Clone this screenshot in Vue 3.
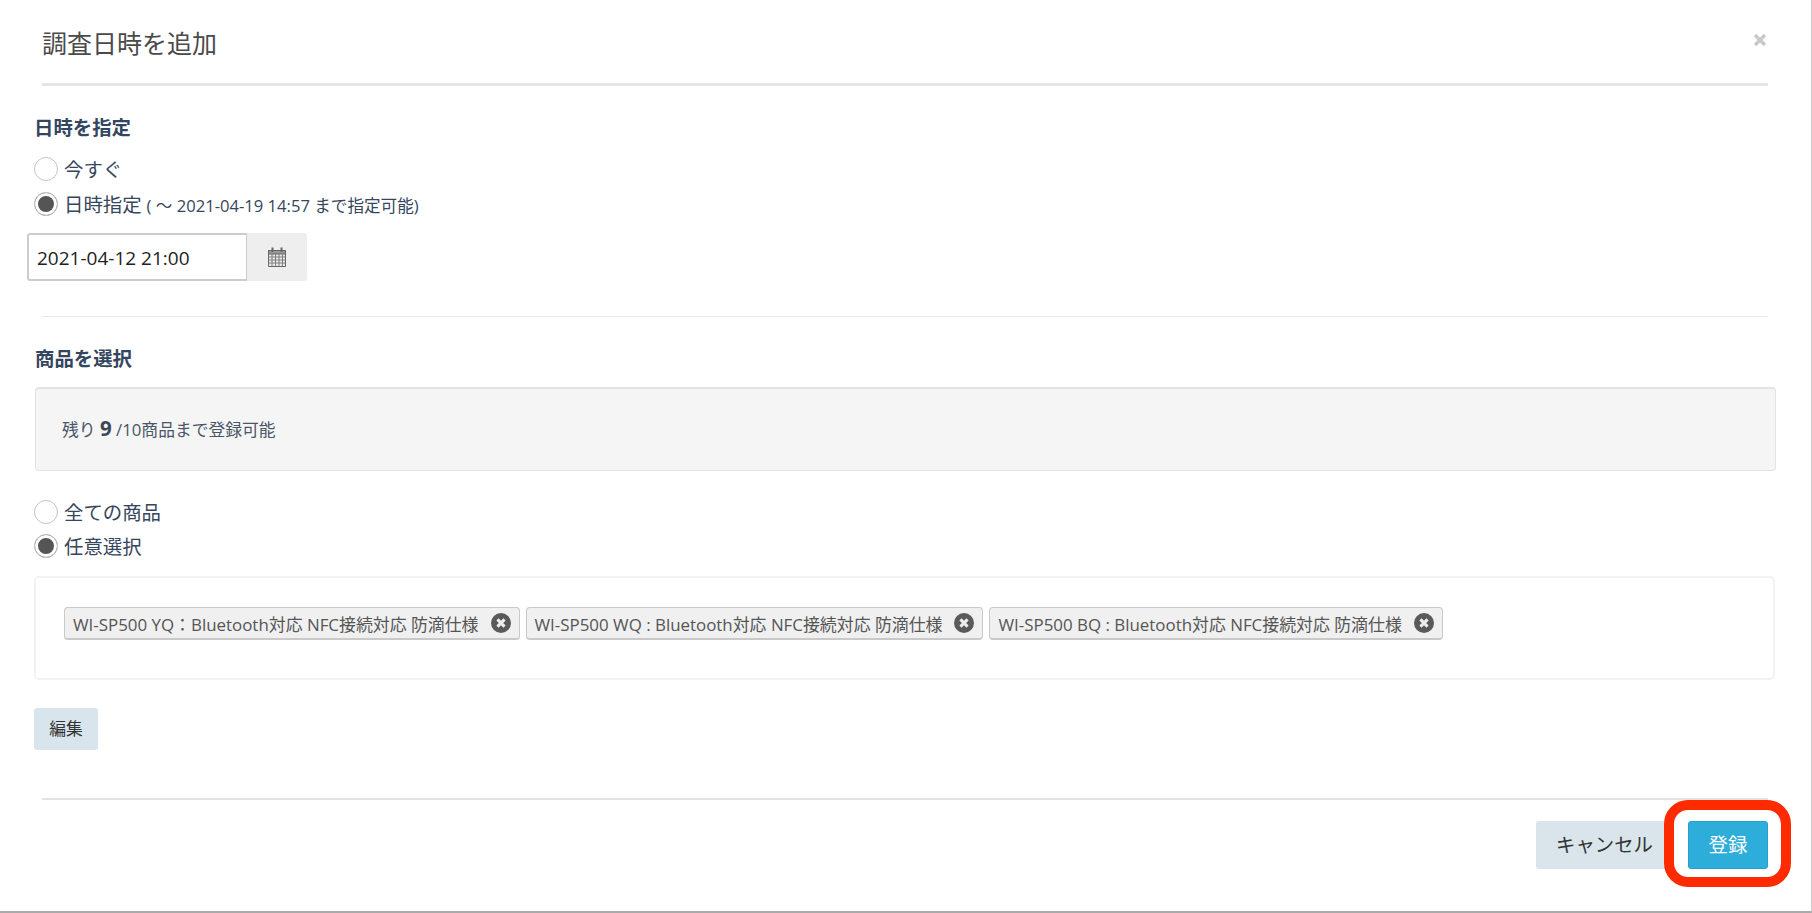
<script setup>
const tags = [
  'WI-SP500 YQ：Bluetooth対応 NFC接続対応 防滴仕様',
  'WI-SP500 WQ : Bluetooth対応 NFC接続対応 防滴仕様',
  'WI-SP500 BQ : Bluetooth対応 NFC接続対応 防滴仕様'
]
</script>

<template>
  <div class="modal">
    <header class="head">
      <h1>調査日時を追加</h1>
      <svg class="close" viewBox="0 0 14 14" width="14" height="14"><path d="M2 2l10 10M12 2L2 12" stroke="#c9c9c9" stroke-width="3.4" fill="none"/></svg>
    </header>

    <section class="date">
      <h2>日時を指定</h2>
      <label class="radio r1"><span class="dot"></span><span class="txt">今すぐ</span></label>
      <label class="radio r2"><span class="dot on"></span><span class="txt">日時指定 <small>( 〜 2021-04-19 14:57 まで指定可能)</small></span></label>
      <div class="picker">
        <div class="field">2021-04-12 21:00</div>
        <div class="addon">
          <svg viewBox="0 0 18 20" width="18" height="20">
            <path d="M.5 3.5h17v16H.5z" fill="#e8e8e8" stroke="#666"/>
            <path d="M.5 3.5h17v3.5H.5z" fill="#999" stroke="#666"/>
            <path d="M.5 10h17M.5 13h17M.5 16h17M4 7v12M7.5 7v12M11 7v12M14.5 7v12" stroke="#777" stroke-width=".9"/>
            <path d="M4.5.5v4.5M13.5.5v4.5" stroke="#666" stroke-width="2"/>
          </svg>
        </div>
      </div>
    </section>

    <section class="items">
      <h2>商品を選択</h2>
      <div class="well">残り <b>9</b> /10商品まで登録可能</div>
      <label class="radio r3"><span class="dot"></span><span class="txt">全ての商品</span></label>
      <label class="radio r4"><span class="dot on"></span><span class="txt">任意選択</span></label>
      <div class="box">
        <span v-for="t in tags" :key="t" class="tag">
          {{ t }}
          <svg viewBox="0 0 18 18" width="20" height="20">
            <circle cx="9" cy="9" r="9" fill="#5a5a5a"/>
            <path d="M5.8 5.8l6.4 6.4M12.2 5.8l-6.4 6.4" stroke="#eee" stroke-width="2.8"/>
          </svg>
        </span>
      </div>
      <button class="edit">編集</button>
    </section>

    <footer class="foot">
      <button class="cancel">キャンセル</button>
      <button class="save">登録<span class="mark"></span></button>
    </footer>
  </div>
</template>

<style>
html, body { margin: 0; background: #fff; }
</style>

<style scoped>
.modal {
  box-sizing: border-box;
  width: 1812px;
  height: 913px;
  overflow: hidden;
  border-right: 1px solid #ccc;
  border-bottom: 2px solid #aaa;
  font-family: "Open Sans", "Noto Sans CJK JP", sans-serif;
  color: #36465c;
  background: #fff;
}
.head {
  position: relative;
  margin: 0 43px 0 42px;
  height: 83px;
  border-bottom: 3px solid #e5e5e5;
}
h1 {
  margin: 0;
  padding-top: 25px;
  font-size: 25px;
  line-height: 36px;
  font-weight: 400;
  color: #4a4a4a;
}
.close { position: absolute; right: 1px; top: 33px; }
h2 {
  margin: 0;
  font-size: 19.4px;
  line-height: 28px;
  font-weight: 700;
  color: #34465f;
}
.date { margin: 0 0 0 34px; padding-top: 28px; height: 230px; box-sizing: border-box; }
.date h2 { height: 43px; }
.radio {
  display: flex;
  align-items: center;
  height: 24px;
  font-size: 19.4px;
  line-height: 24px;
  white-space: pre;
}
.txt { padding-top: 2px; }
.r2 { margin-top: 11px; }
small { font-size: 16.6px; }
.dot {
  box-sizing: border-box;
  width: 24px;
  height: 24px;
  margin-right: 6px;
  border-radius: 50%;
  border: 1.5px solid #c4c4c4;
  background: #fff;
  flex: none;
}
.dot.on {
  background: #555;
  box-shadow: inset 0 0 0 3px #fff;
}
.picker { display: flex; margin: 17px 0 0 -7px; width: 280px; height: 48px; }
.field {
  box-sizing: border-box;
  width: 220px;
  border: 2px solid #ccc;
  border-right-width: 1px;
  border-radius: 3px 0 0 3px;
  padding-left: 8px;
  font-size: 19px;
  line-height: 46px;
  color: #222;
}
.addon {
  flex: 1;
  display: flex;
  align-items: center;
  justify-content: center;
  background: #eee;
  border-radius: 0 3px 3px 0;
}
.items {
  margin: 0 43px 0 42px;
  border-top: 1px solid #e7e7e7;
  padding-top: 28px;
  height: 484px;
  box-sizing: border-box;
  border-bottom: 2px solid #e3e3e3;
}
.items h2 { height: 42px; margin-left: -7px; }
.well {
  box-sizing: border-box;
  width: 1741px;
  height: 84px;
  margin-left: -7px;
  background: #f5f5f5;
  border: 1px solid #e3e3e3;
  border-top: 2px solid #e4e4e4;
  border-radius: 4px;
  padding-left: 26px;
  font-size: 16.8px;
  line-height: 79px;
  color: #4a5568;
  margin-bottom: 29px;
}
.well b { font-size: 20.5px; color: #3c4658; }
.items > .radio { margin-left: -8px; }
.r4 { margin-top: 10px; }
.box {
  box-sizing: border-box;
  width: 1741px;
  height: 104px;
  margin-top: 18px;
  margin-left: -8px;
  border: 2px solid #f2f2f2;
  border-radius: 5px;
  padding: 29px 0 0 28px;
  display: flex;
  gap: 6px;
}
.tag {
  box-sizing: border-box;
  height: 33px;
  display: flex;
  align-items: center;
  gap: 12px;
  padding: 0 8px;
  background: #f0f0f0;
  border: 1px solid #c9c9c9;
  border-bottom-width: 2px;
  border-radius: 4px;
  font-size: 16.9px;
  color: #555;
  white-space: nowrap;
}
button {
  font-family: inherit;
  border: 0;
  border-radius: 3px;
  padding: 0;
  color: #333;
}
.edit {
  display: block;
  width: 64px;
  height: 42px;
  margin-top: 28px;
  margin-left: -8px;
  padding-bottom: 3px;
  background: #d8e5ec;
  font-size: 16.8px;
}
.foot {
  margin-right: 43px;
  padding-top: 21px;
  display: flex;
  justify-content: flex-end;
}
.foot button { height: 48px; padding-bottom: 3px; font-size: 19.4px; }
.cancel { width: 137px; background: #d9e5eb; }
.save {
  position: relative;
  width: 80px;
  margin-left: 15px;
  background: #2dadd9;
  border: 1px solid #25a0cc;
  color: #fff;
}
.mark {
  position: absolute;
  left: -25px;
  top: -22px;
  width: 127px;
  height: 87px;
  box-sizing: border-box;
  border: 10px solid #fe2b00;
  border-radius: 24px;
}
</style>
